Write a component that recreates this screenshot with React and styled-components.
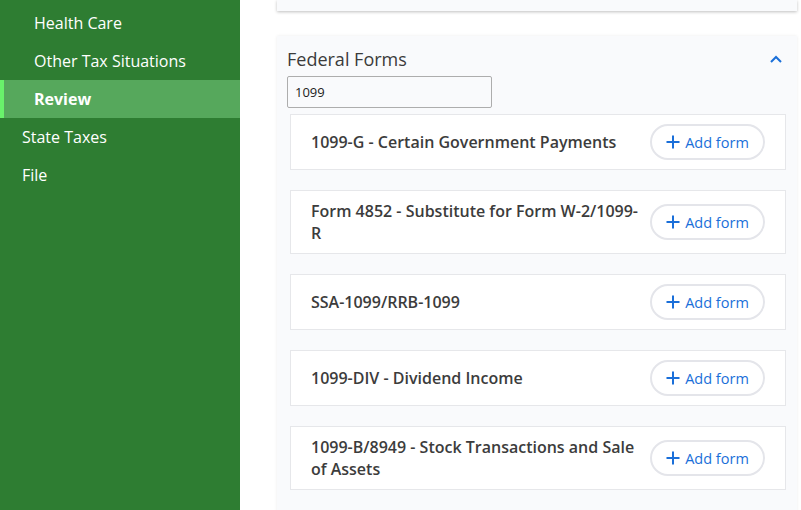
import React from "react";
import styled, { createGlobalStyle } from "styled-components";

const GlobalStyle = createGlobalStyle`
    html, body {
        margin: 0;
        padding: 0;
        background: #ffffff;
        font-family: "Open Sans", "Noto Sans", sans-serif;
    }
    * { box-sizing: border-box; }
`;

const Page = styled.div`
    display: flex;
    width: 801px;
    height: 510px;
    overflow: hidden;
`;

const Sidebar = styled.nav`
    width: 240px;
    flex-shrink: 0;
    background: #2e7d32;
    padding-top: 4px;
    display: flex;
    flex-direction: column;
`;

const NavItem = styled.div`
    height: 38px;
    display: flex;
    align-items: center;
    color: #ffffff;
    font-size: 16px;
    font-weight: ${({ active }) => (active ? 700 : 500)};
    background: ${({ active }) => (active ? "#56a85c" : "transparent")};
    border-left: ${({ active }) => (active ? "4px solid #69f26b" : "none")};
    padding-left: ${({ sub, active }) => (active ? "30px" : sub ? "34px" : "22px")};
`;

const Main = styled.main`
    flex: 1;
    padding: 0 4px 0 37px;
    display: flex;
    flex-direction: column;
    gap: 25px;
`;

const TopCard = styled.div`
    height: 11px;
    flex-shrink: 0;
    background: #f9fafc;
    box-shadow: 0 1px 3px rgba(0, 0, 0, 0.25);
`;

const Card = styled.section`
    background: #f9fafc;
    box-shadow: 0 0 3px rgba(0, 0, 0, 0.08);
    padding: 10px 11px 30px 10px;
`;

const CardHeader = styled.div`
    display: flex;
    align-items: center;
    justify-content: space-between;
    height: 26px;
    margin-bottom: 4px;
`;

const CardTitle = styled.h2`
    margin: 0;
    font-size: 18px;
    font-weight: 400;
    color: #3b3b3b;
`;

const Search = styled.input`
    display: block;
    width: 205px;
    height: 32px;
    border: 1px solid #adadad;
    border-radius: 2px;
    background: #f9fafc;
    padding: 0 7px;
    font-family: inherit;
    font-size: 13px;
    color: #222;
    outline: none;
`;

const FormList = styled.div`
    display: flex;
    flex-direction: column;
    gap: 20px;
    margin: 6px 0 0 3px;
`;

const FormRow = styled.div`
    display: flex;
    align-items: center;
    justify-content: space-between;
    min-height: 56px;
    padding: 9px 20px;
    background: #ffffff;
    border: 1px solid #e6e7ea;
    gap: 10px;
`;

const FormName = styled.span`
    font-size: 16px;
    font-weight: 600;
    color: #3c3c3c;
    line-height: 22px;
    max-width: 332px;
`;

const AddButton = styled.button`
    flex-shrink: 0;
    width: 115px;
    height: 36px;
    border: 2px solid #e4e5ea;
    border-radius: 18px;
    background: #ffffff;
    color: #1a6fd9;
    font-family: inherit;
    font-size: 14.5px;
    display: flex;
    align-items: center;
    justify-content: center;
    gap: 5px;
    padding: 0;
    cursor: pointer;
`;

const Plus = () => (
    <svg width="14" height="14" viewBox="0 0 14 14">
        <path d="M7 0.5v13M0.5 7h13" stroke="#1a6fd9" strokeWidth="2" fill="none" />
    </svg>
);

const ChevronUp = () => (
    <svg width="14" height="10" viewBox="0 0 14 10" style={{ marginRight: 3 }}>
        <path d="M2 8l5-5 5 5" stroke="#1a6fd9" strokeWidth="2" fill="none" />
    </svg>
);

const forms = [
    "1099-G - Certain Government Payments",
    "Form 4852 - Substitute for Form W-2/1099-R",
    "SSA-1099/RRB-1099",
    "1099-DIV - Dividend Income",
    "1099-B/8949 - Stock Transactions and Sale of Assets",
];

export default function App() {
    return (
        <Page>
            <GlobalStyle />
            <Sidebar>
                <NavItem sub>Health Care</NavItem>
                <NavItem sub>Other Tax Situations</NavItem>
                <NavItem sub active>Review</NavItem>
                <NavItem>State Taxes</NavItem>
                <NavItem>File</NavItem>
            </Sidebar>
            <Main>
                <TopCard />
                <Card>
                    <CardHeader>
                        <CardTitle>Federal Forms</CardTitle>
                        <ChevronUp />
                    </CardHeader>
                    <Search defaultValue="1099" />
                    <FormList>
                        {forms.map((f) => (
                            <FormRow key={f}>
                                <FormName>{f}</FormName>
                                <AddButton>
                                    <Plus />
                                    Add form
                                </AddButton>
                            </FormRow>
                        ))}
                    </FormList>
                </Card>
            </Main>
        </Page>
    );
}
